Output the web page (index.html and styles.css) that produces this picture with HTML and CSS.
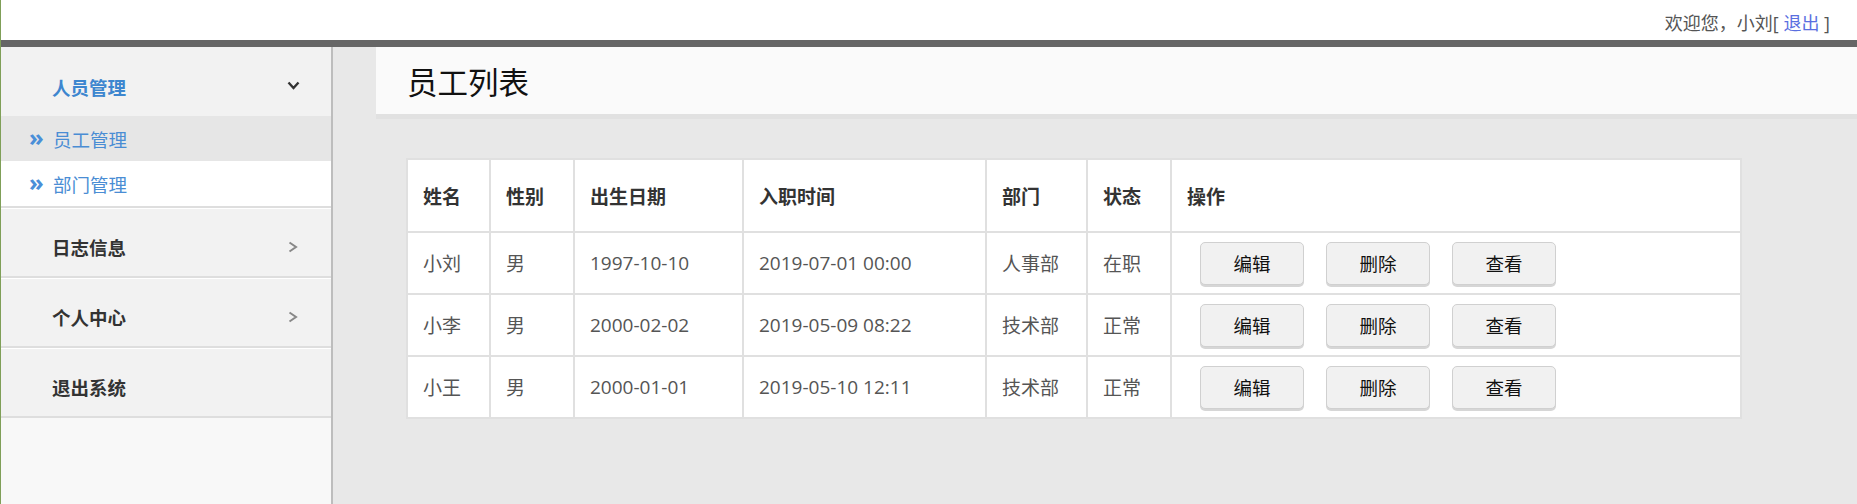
FILE: index.html
```html
<!DOCTYPE html>
<html lang="zh-CN">
<head>
<meta charset="utf-8">
<title>员工列表</title>
<link rel="stylesheet" href="styles.css">
</head>
<body>
<div class="page">
  <header class="topbar">
    <span class="welcome">欢迎您，小刘[ <a class="logout" href="#">退出</a> ]</span>
  </header>
  <div class="topline"></div>
  <div class="layout">
    <aside class="sidebar">
      <div class="group group-open">
        <div class="group-title blue">
          <span>人员管理</span>
          <svg class="caret-down" width="13" height="9" viewBox="0 0 13 9"><path d="M1.5 1.5 L6.5 7 L11.5 1.5" fill="none" stroke="#333" stroke-width="2.4"/></svg>
        </div>
        <ul class="submenu">
          <li class="sub current"><span class="dbl">»</span>员工管理</li>
          <li class="sub"><span class="dbl">»</span>部门管理</li>
        </ul>
      </div>
      <div class="group">
        <div class="group-title">
          <span>日志信息</span>
          <svg class="caret-right" width="10" height="12" viewBox="0 0 10 12"><path d="M1.5 1.5 L8 6 L1.5 10.5" fill="none" stroke="#888" stroke-width="2"/></svg>
        </div>
      </div>
      <div class="group">
        <div class="group-title">
          <span>个人中心</span>
          <svg class="caret-right" width="10" height="12" viewBox="0 0 10 12"><path d="M1.5 1.5 L8 6 L1.5 10.5" fill="none" stroke="#888" stroke-width="2"/></svg>
        </div>
      </div>
      <div class="group">
        <div class="group-title">
          <span>退出系统</span>
        </div>
      </div>
    </aside>
    <main class="content">
      <div class="title-panel"><h1>员工列表</h1></div>
      <table class="grid">
        <thead>
          <tr>
            <th class="c1">姓名</th>
            <th class="c2">性别</th>
            <th class="c3">出生日期</th>
            <th class="c4">入职时间</th>
            <th class="c5">部门</th>
            <th class="c6">状态</th>
            <th class="c7">操作</th>
          </tr>
        </thead>
        <tbody>
          <tr>
            <td>小刘</td><td>男</td><td>1997-10-10</td><td>2019-07-01 00:00</td><td>人事部</td><td>在职</td>
            <td><div class="ops"><button class="btn">编辑</button><button class="btn">删除</button><button class="btn">查看</button></div></td>
          </tr>
          <tr>
            <td>小李</td><td>男</td><td>2000-02-02</td><td>2019-05-09 08:22</td><td>技术部</td><td>正常</td>
            <td><div class="ops"><button class="btn">编辑</button><button class="btn">删除</button><button class="btn">查看</button></div></td>
          </tr>
          <tr>
            <td>小王</td><td>男</td><td>2000-01-01</td><td>2019-05-10 12:11</td><td>技术部</td><td>正常</td>
            <td><div class="ops"><button class="btn">编辑</button><button class="btn">删除</button><button class="btn">查看</button></div></td>
          </tr>
        </tbody>
      </table>
    </main>
  </div>
</div>
</body>
</html>
```
FILE: styles.css
```css
* { box-sizing: border-box; }
html, body { margin: 0; padding: 0; }
body {
  font-family: "Open Sans", "Noto Sans CJK SC", sans-serif;
  font-size: 17.5px;
  color: #555;
  background: #fff;
}
.page {
  height: 504px;
  border-left: 1px solid #7f9f58;
  display: flex;
  flex-direction: column;
  overflow: hidden;
}
.topbar {
  height: 40px;
  background: #fff;
  display: flex;
  justify-content: flex-end;
  align-items: center;
  padding: 4px 27px 0 0;
}
.welcome { color: #555; font-size: 18px; }
.logout { color: #5a6fe0; text-decoration: none; }
.topline { height: 7px; background: #666; }
.layout { flex: 1; display: flex; min-height: 0; }
.sidebar {
  width: 332px;
  flex: none;
  background: #f8f8f8;
  border-right: 2px solid #bdbdbd;
  font-size: 18.5px;
}
.group {
  background: #f2f2f2;
  border-top: 1px solid #fff;
  border-bottom: 2px solid #dedede;
}
.group-open { border-top: 0; }
.group-title {
  height: 67px;
  display: flex;
  align-items: center;
  justify-content: space-between;
  padding: 8px 31px 0 51px;
  font-weight: bold;
  color: #333;
}
.group-open .group-title { height: 69px; padding-top: 11px; }
.group-title.blue { color: #3d86cf; }
.caret-down { margin-top: -4px; }
.caret-right { margin-right: 2px; }
.submenu { list-style: none; margin: 0; padding: 0; }
.sub {
  height: 45px;
  display: flex;
  align-items: center;
  padding-left: 28px;
  background: #fff;
  color: #4a8dd4;
}
.sub.current { background: #e6e6e6; }
.dbl {
  width: 24px;
  font-size: 24px;
  line-height: 1;
  color: #4a8fd8;
  font-weight: bold;
  margin-top: -4px;
}
.content {
  flex: 1;
  background: #e8e8e8;
  min-width: 0;
}
.title-panel {
  margin-left: 43px;
  height: 72px;
  background: #fafafa;
  border-bottom: 5px solid #e1e1e1;
  display: flex;
  align-items: center;
  padding-left: 31px;
}
.title-panel h1 {
  margin: 0;
  font-size: 30.5px;
  font-weight: normal;
  color: #111;
}
.grid {
  margin: 39px 0 0 73px;
  width: 1336px;
  table-layout: fixed;
  border-collapse: separate;
  border-spacing: 0;
  border-top: 2px solid #e0e0e0;
  border-left: 2px solid #e0e0e0;
  background: #fff;
  font-size: 19px;
}
.grid th, .grid td {
  border-right: 2px solid #e0e0e0;
  border-bottom: 2px solid #e0e0e0;
  padding: 0 15px;
  text-align: left;
  white-space: nowrap;
}
.grid th { height: 73px; color: #333; font-weight: bold; }
.grid td { height: 62px; color: #555; }
.c1 { width: 83px; }
.c2 { width: 84px; }
.c3 { width: 169px; }
.c4 { width: 243px; }
.c5 { width: 101px; }
.c6 { width: 84px; }
.c7 { width: 570px; }
.ops { display: flex; gap: 22px; padding-left: 13px; }
.btn {
  width: 104px;
  height: 43px;
  background: #f1f1f1;
  border: 1px solid #d0d0d0;
  border-radius: 5px;
  box-shadow: 0 2px 0 #d6d6d6;
  font-family: "Noto Sans CJK SC", sans-serif;
  font-size: 18.5px;
  color: #111;
  padding: 0;
}
```
